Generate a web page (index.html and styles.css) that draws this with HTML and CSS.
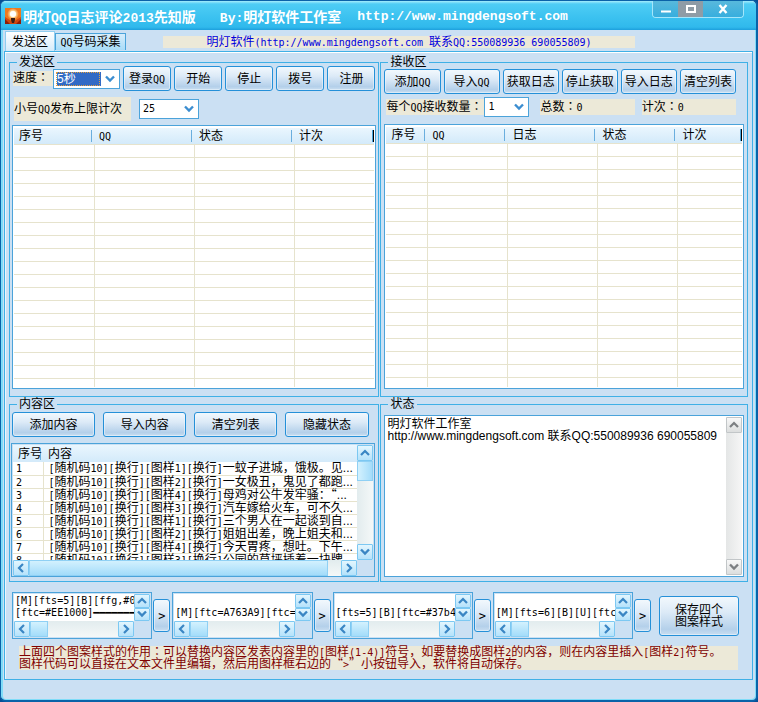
FILE: index.html
```html
<!DOCTYPE html>
<html lang="zh-CN">
<head>
<meta charset="utf-8">
<title>明灯QQ日志评论2013先知版</title>
<link rel="stylesheet" href="styles.css">
</head>
<body>
<svg class="defs" aria-hidden="true">
  <symbol id="down" viewBox="0 0 10 8"><path d="M1 1.500L5 5.500L9 1.500" fill="none" stroke="currentColor" stroke-width="2.400"/></symbol>
  <symbol id="up" viewBox="0 0 10 8"><path d="M1 6L5 2L9 6" fill="none" stroke="currentColor" stroke-width="2.200"/></symbol>
  <symbol id="left" viewBox="0 0 8 10"><path d="M6 1L2 5L6 9" fill="none" stroke="currentColor" stroke-width="2.200"/></symbol>
  <symbol id="right" viewBox="0 0 8 10"><path d="M2 1L6 5L2 9" fill="none" stroke="currentColor" stroke-width="2.200"/></symbol>
</svg>
<div class="window">
  <header class="titlebar">
    <svg class="logo" viewBox="0 0 16 16" aria-hidden="true">
      <defs><radialGradient id="glow"><stop offset="0" stop-color="#fff"/><stop offset=".45" stop-color="#ffe9a8"/><stop offset="1" stop-color="#f07018"/></radialGradient></defs>
      <rect width="16" height="16" fill="#cf4712"/>
      <path d="M0 0h16v9L8 14L0 9z" fill="#ef7a1c"/>
      <circle cx="8" cy="6" r="6" fill="url(#glow)"/>
      <circle cx="8" cy="6" r="3" fill="#fff"/>
      <path d="M6 10h4v2l-1 3H7l-1-3z" fill="#3c2018"/>
      <path d="M0 11l5 5H0zM16 11l-5 5h5z" fill="#8e1c08"/>
    </svg>
    <h1 class="title">
      <span>明灯<span class="en">QQ</span>日志评论<span class="en">2013</span>先知版</span>
      <span><span class="en">By:</span>明灯软件工作室</span>
      <span class="en">http://www.mingdengsoft.com</span>
    </h1>
    <div class="controls">
      <button class="ctl" aria-label="最小化"><svg width="12" height="10"><path d="M1 7.500H11" stroke="#fff" stroke-width="2"/></svg></button>
      <button class="ctl ctl-max" aria-label="最大化"><svg width="12" height="10"><rect x="2" y="2" width="8" height="6" fill="none" stroke="#fff" stroke-width="2"/></svg></button>
      <button class="ctl ctl-close" aria-label="关闭"><svg width="12" height="10"><path d="M2.500 1L9.500 9M9.500 1L2.500 9" stroke="#fff" stroke-width="2.400"/></svg></button>
    </div>
  </header>

  <div class="tabrow">
    <button class="tab tab-on">发送区</button>
    <button class="tab"><span class="l">QQ</span>号码采集</button>
    <p class="notice">明灯软件<span class="l">(http://www.mingdengsoft.com </span>联系<span class="l">QQ:550089936 690055809)</span></p>
  </div>

  <main class="page">
    <div class="groups">
      <fieldset class="group">
        <legend>发送区</legend>
        <div class="row send-row">
          <label class="tag tag-speed" for="speed">速度<span class="mid" lang="zh-TW">：</span></label>
          <span class="combo combo-speed"><select id="speed"><option>5秒</option></select><svg><use href="#down"/></svg></span>
          <button class="btn">登录<span class="l">QQ</span></button>
          <button class="btn">开始</button>
          <button class="btn">停止</button>
          <button class="btn">拨号</button>
          <button class="btn">注册</button>
        </div>
        <div class="row limit-row">
          <label class="tag tag-limit" for="limit">小号<span class="l">QQ</span>发布上限计次</label>
          <span class="combo combo-limit"><select id="limit" class="l"><option>25</option></select><svg><use href="#down"/></svg></span>
        </div>
        <div class="sheet">
          <table class="grid grid-send">
            <colgroup><col class="c80"><col class="c100"><col class="c100"><col></colgroup>
            <thead><tr><th>序号</th><th><span class="l">QQ</span></th><th>状态</th><th>计次</th></tr></thead>
            <tbody><tr><td></td><td></td><td></td><td></td></tr></tbody>
          </table>
        </div>
      </fieldset>

      <fieldset class="group">
        <legend>接收区</legend>
        <div class="row recv-row">
          <button class="btn">添加<span class="l">QQ</span></button>
          <button class="btn">导入<span class="l">QQ</span></button>
          <button class="btn">获取日志</button>
          <button class="btn">停止获取</button>
          <button class="btn">导入日志</button>
          <button class="btn">清空列表</button>
        </div>
        <div class="row count-row">
          <label class="tag tag-count" for="count">每个<span class="l">QQ</span>接收数量<span class="mid" lang="zh-TW">：</span></label>
          <span class="combo combo-count"><select id="count" class="l"><option>1</option></select><svg><use href="#down"/></svg></span>
          <span class="tag tag-total">总数<span class="mid" lang="zh-TW">：</span><span class="l">0</span></span>
          <span class="tag tag-times">计次<span class="mid" lang="zh-TW">：</span><span class="l">0</span></span>
        </div>
        <div class="sheet">
          <table class="grid grid-recv">
            <colgroup><col class="c40"><col class="c80"><col class="c90"><col class="c80"><col></colgroup>
            <thead><tr><th>序号</th><th><span class="l">QQ</span></th><th>日志</th><th>状态</th><th>计次</th></tr></thead>
            <tbody><tr><td></td><td></td><td></td><td></td><td></td></tr></tbody>
          </table>
        </div>
      </fieldset>

      <fieldset class="group">
        <legend>内容区</legend>
        <div class="row content-row">
          <button class="btn">添加内容</button>
          <button class="btn">导入内容</button>
          <button class="btn">清空列表</button>
          <button class="btn">隐藏状态</button>
        </div>
        <div class="scroller list">
          <div class="view">
            <table class="items">
              <colgroup><col class="c30"><col></colgroup>
              <thead><tr><th>序号</th><th>内容</th></tr></thead>
              <tbody>
                <tr><td><span class="l">1</span></td><td><span class="l">[</span>随机码<span class="l">10][</span>换行<span class="l">][</span>图样<span class="l">1][</span>换行<span class="l">]</span>一蚊子进城，饿极。见...</td></tr>
                <tr><td><span class="l">2</span></td><td><span class="l">[</span>随机码<span class="l">10][</span>换行<span class="l">][</span>图样<span class="l">2][</span>换行<span class="l">]</span>一女极丑，鬼见了都跑...</td></tr>
                <tr><td><span class="l">3</span></td><td><span class="l">[</span>随机码<span class="l">10][</span>换行<span class="l">][</span>图样<span class="l">4][</span>换行<span class="l">]</span>母鸡对公牛发牢骚：<span class="wide">“</span>...</td></tr>
                <tr><td><span class="l">4</span></td><td><span class="l">[</span>随机码<span class="l">10][</span>换行<span class="l">][</span>图样<span class="l">3][</span>换行<span class="l">]</span>汽车嫁给火车，可不久...</td></tr>
                <tr><td><span class="l">5</span></td><td><span class="l">[</span>随机码<span class="l">10][</span>换行<span class="l">][</span>图样<span class="l">1][</span>换行<span class="l">]</span>三个男人在一起谈到自...</td></tr>
                <tr><td><span class="l">6</span></td><td><span class="l">[</span>随机码<span class="l">10][</span>换行<span class="l">][</span>图样<span class="l">2][</span>换行<span class="l">]</span>姐姐出差，晚上姐夫和...</td></tr>
                <tr><td><span class="l">7</span></td><td><span class="l">[</span>随机码<span class="l">10][</span>换行<span class="l">][</span>图样<span class="l">4][</span>换行<span class="l">]</span>今天胃疼，想吐。下午...</td></tr>
                <tr><td><span class="l">8</span></td><td><span class="l">[</span>随机码<span class="l">10][</span>换行<span class="l">][</span>图样<span class="l">3][</span>换行<span class="l">]</span>公园的草坪插着一块牌</td></tr>
              </tbody>
            </table>
          </div>
          <div class="vbar"><button class="arrow" aria-label="向上"><svg><use href="#up"/></svg></button><i class="thumb"></i><button class="arrow" aria-label="向下"><svg><use href="#down"/></svg></button></div>
          <div class="hbar"><button class="arrow" aria-label="向左"><svg><use href="#left"/></svg></button><i class="thumb"></i><button class="arrow" aria-label="向右"><svg><use href="#right"/></svg></button></div>
        </div>
      </fieldset>

      <fieldset class="group">
        <legend>状态</legend>
        <div class="scroller log">
          <textarea class="view" aria-label="状态" spellcheck="false">明灯软件工作室
http://www.mingdengsoft.com 联系QQ:550089936 690055809</textarea>
          <div class="vbar"><button class="arrow" aria-label="向上"><svg><use href="#up"/></svg></button><button class="arrow" aria-label="向下"><svg><use href="#down"/></svg></button></div>
        </div>
      </fieldset>
    </div>

    <div class="patterns">
      <div class="scroller code">
        <textarea class="view" aria-label="图样1" wrap="off" spellcheck="false">[M][fts=5][B][ffg,#0
[ftc=#EE1000]━━━━━━━</textarea>
        <div class="vbar"><button class="arrow" aria-label="向上"><svg><use href="#up"/></svg></button><button class="arrow" aria-label="向下"><svg><use href="#down"/></svg></button></div>
        <div class="hbar"><button class="arrow" aria-label="向左"><svg><use href="#left"/></svg></button><i class="thumb"></i><button class="arrow" aria-label="向右"><svg><use href="#right"/></svg></button></div>
      </div>
      <button class="btn go">&gt;</button>
      <div class="scroller code">
        <textarea class="view" aria-label="图样2" wrap="off" spellcheck="false">

[M][ftc=A763A9][ftc=</textarea>
        <div class="vbar"><button class="arrow" aria-label="向上"><svg><use href="#up"/></svg></button><button class="arrow" aria-label="向下"><svg><use href="#down"/></svg></button></div>
        <div class="hbar"><button class="arrow" aria-label="向左"><svg><use href="#left"/></svg></button><i class="thumb"></i><button class="arrow" aria-label="向右"><svg><use href="#right"/></svg></button></div>
      </div>
      <button class="btn go">&gt;</button>
      <div class="scroller code">
        <textarea class="view" aria-label="图样3" wrap="off" spellcheck="false">

[fts=5][B][ftc=#37b4</textarea>
        <div class="vbar"><button class="arrow" aria-label="向上"><svg><use href="#up"/></svg></button><button class="arrow" aria-label="向下"><svg><use href="#down"/></svg></button></div>
        <div class="hbar"><button class="arrow" aria-label="向左"><svg><use href="#left"/></svg></button><i class="thumb"></i><button class="arrow" aria-label="向右"><svg><use href="#right"/></svg></button></div>
      </div>
      <button class="btn go">&gt;</button>
      <div class="scroller code">
        <textarea class="view" aria-label="图样4" wrap="off" spellcheck="false">

[M][fts=6][B][U][ftc</textarea>
        <div class="vbar"><button class="arrow" aria-label="向上"><svg><use href="#up"/></svg></button><button class="arrow" aria-label="向下"><svg><use href="#down"/></svg></button></div>
        <div class="hbar"><button class="arrow" aria-label="向左"><svg><use href="#left"/></svg></button><i class="thumb"></i><button class="arrow" aria-label="向右"><svg><use href="#right"/></svg></button></div>
      </div>
      <button class="btn go">&gt;</button>
      <button class="btn save">保存四个<br>图案样式</button>
    </div>

    <p class="hint">上面四个图案样式的作用<span class="mid" lang="zh-TW">：</span>可以替换内容区发表内容里的<span class="l">[</span>图样<span class="l">(1-4)]</span>符号，如要替换成图样<span class="l">2</span>的内容，则在内容里插入<span class="l">[</span>图样<span class="l">2]</span>符号。<br>图样代码可以直接在文本文件里编辑，然后用图样框右边的<span class="wide">“</span><span class="l">&gt;</span><span class="wide">”</span>小按钮导入，软件将自动保存。</p>
  </main>
</div>
</body>
</html>
```
FILE: styles.css
```css
* { box-sizing: border-box; }

:root {
  --face: #cbe0f3;
  --line: #3fb0e6;
  --frame: #4ba3da;
  --tan: #ece9d8;
}

body {
  margin: 0;
  background: #064f96;
  color: #000;
  font: 12px/12px "Liberation Sans", "Noto Sans CJK SC", sans-serif;
}

button, select, textarea { font: inherit; color: inherit; margin: 0; }
button { padding: 0; white-space: nowrap; }
h1, p { margin: 0; }
.defs { position: absolute; width: 0; height: 0; }

/* Latin runs take half the width of a Chinese character */
.l { font-family: "DejaVu Sans Mono", monospace; font-size: 10px; white-space: pre; }
span.l, .mid, .wide, .en { line-height: 0; }
/* colon centred in its cell, and full-width quotes */
.mid { font-family: "Noto Sans CJK TC", sans-serif; }
.wide { font-family: "Noto Sans CJK SC", sans-serif; }

.window {
  display: flex;
  flex-direction: column;
  min-height: 100vh;
  border: 2px solid #0a62a8;
  border-width: 1px 2px 2px 1px;
  border-radius: 6px;
  background: var(--face);
  box-shadow: inset 2px 0 #7fdcf8, inset -1px -1px #7fdcf8;
  padding-bottom: 20px;
}

/* title bar */
.titlebar {
  display: flex;
  height: 29px;
  padding: 0 12px 0 4px;
  border-radius: 5px 5px 0 0;
  background: linear-gradient(#a4ecfc, #4ecdf5 3px, #3cc2f0 55%, #30b9ec 90%, #1d9fdd);
}
.logo { width: 16px; height: 16px; margin-top: 7px; }
.title {
  flex: 1;
  display: flex;
  margin: 8px 0 0 2px;
  color: #fff;
  font-size: 14px;
  line-height: 16px;
  white-space: nowrap;
}
.title > span { margin-right: 16px; line-height: 16px; }
.title > span:first-child { margin-right: 24px; }
.title .en { font-family: "Liberation Mono", monospace; font-size: 13px; }
.controls {
  display: flex;
  height: 17px;
  border: 1px solid #a5e6fa;
  border-top: 0;
  border-radius: 0 0 4px 4px;
  overflow: hidden;
}
.ctl {
  display: flex;
  align-items: center;
  justify-content: center;
  width: 25px;
  border: 0;
  background: linear-gradient(#58b9dc, #37aede);
}
.ctl-max { background: #8f9ca6; }
.ctl-close { width: 40px; }

/* tabs */
.tabrow {
  display: flex;
  align-items: flex-end;
  height: 21px;
  padding-left: 4px;
  margin-right: 2px;
}
.tab {
  width: 71px;
  height: 17px;
  margin-bottom: 1px;
  border: 1px solid var(--frame);
  border-bottom: 0;
  background: linear-gradient(#d7edfb, #a9dcf8);
}
.tab-on {
  width: 50px;
  height: 20px;
  margin-bottom: 0;
  border-color: #8fcdf0;
  background: linear-gradient(#fff, #d5ebfa);
}
.notice {
  flex: 1;
  max-width: 472px;
  margin: 0 0 3px 37px;
  background: var(--tan);
  color: #0000e0;
  text-align: center;
  white-space: nowrap;
}

.page {
  flex: 1;
  display: flex;
  flex-direction: column;
  margin: 0 3px;
  padding: 3px 4px 9px 4px;
  border: 1px solid var(--line);
  box-shadow: inset 0 1px #fff, inset 1px 0 #eaf5fd;
}
.groups {
  flex: 1;
  display: grid;
  grid-template-columns: 371fr 368fr;
  grid-template-rows: 342fr 185fr;
  gap: 0 1px;
}
.group {
  display: flex;
  flex-direction: column;
  min-width: 0;
  min-height: 0;
  margin: 0;
  padding: 0 2px 7px;
  border: 1px solid var(--line);
}
legend { height: 14px; margin-left: 5px; padding: 0 2px; line-height: 14px; }

/* toolbars */
.row { display: flex; align-items: center; }
.btn {
  height: 25px;
  border: 1px solid #2590d8;
  border-radius: 3px;
  background: linear-gradient(#f2f8fd, #dceaf7 40%, #b4d0ea 85%, #c9def1);
  box-shadow: inset 0 0 0 1px #f0f8fe88;
}
.row .btn { flex: 1; min-width: 0; }
.send-row { gap: 3px; margin-top: -3px; padding: 0 1px; }
.limit-row { gap: 8px; margin-top: 6px; padding-left: 2px; }
.recv-row { gap: 3px; padding: 0 9px 0 1px; }
.count-row { margin: 3px 9px 0 3px; }
.content-row { gap: 8px; margin-top: 1px; padding-right: 8px; }

.tag { background: var(--tan); white-space: nowrap; }
.tag-speed { width: 40px; height: 15px; margin-right: -3px; line-height: 15px; }
.tag-limit { width: 117px; height: 24px; line-height: 24px; }
.tag-count { width: 98px; height: 16px; line-height: 16px; }
.tag-total, .tag-times { flex: 1; height: 16px; line-height: 16px; }
.tag-total { margin: 0 7px 0 11px; }

.combo { display: grid; height: 20px; }
.combo > * { grid-area: 1 / 1; }
.combo select {
  width: 100%;
  appearance: none;
  border: 1px solid var(--frame);
  border-radius: 0;
  background: #fff;
  padding: 2px 18px 2px 3px;
  outline: 0;
}
.combo svg { width: 10px; height: 8px; margin: 6px 5px 0 0; justify-self: end; color: #3b8dd0; pointer-events: none; }
.combo-speed { width: 67px; position: relative; }
.combo-speed select { background: linear-gradient(#316ac5, #316ac5) content-box, #fff; color: #fff; }
.combo-speed::after {
  content: "";
  position: absolute;
  inset: 3px 20px 3px 3px;
  border: 1px dotted #e0a040;
}
.combo-limit { width: 60px; }
.combo-count { width: 45px; }

/* empty record sheets */
.sheet {
  flex: 1;
  display: flex;
  min-height: 0;
  margin-top: 4px;
  padding: 2px 1px 1px;
  border: 1px solid var(--frame);
  background: #fff;
}
.count-row + .sheet { margin: 7px 1px 0; }
.grid, .items { width: 100%; border-collapse: collapse; table-layout: fixed; }
.grid th, .items th {
  height: 16px;
  padding: 0 0 0 5px;
  background: linear-gradient(90deg, #6aaede, #6aaede) right 2px center / 1px 12px no-repeat, linear-gradient(#eaf6fe, #d3eafa);
  font-weight: normal;
  text-align: left;
  white-space: nowrap;
}
.grid th:last-child { background: linear-gradient(90deg, #4ba3da 1px, #000 1px) right / 2px 12px no-repeat, linear-gradient(#eaf6fe, #d3eafa); }
.grid td {
  border-right: 1px solid #e6e3cd;
  background: repeating-linear-gradient(#e6e3cd 0 1px, #fff 1px 13px);
}
.grid td:last-child { border-right: 0; }
.grid thead { height: 16px; }
.c30 { width: 30px; }
.c40 { width: 41px; }
.c80 { width: 80px; }
.c90 { width: 90px; }
.c100 { width: 100px; }

/* framed views with their own scroll bars */
.scroller {
  display: grid;
  grid-template-columns: 1fr 16px;
  grid-template-rows: 1fr 16px;
  min-height: 0;
  padding: 1px;
  border: 1px solid var(--frame);
  background: linear-gradient(#fff, #fff) padding-box;
}
.view { min-width: 0; min-height: 0; overflow: hidden; background: #fff; }
textarea.view { width: 100%; height: 100%; resize: none; border: 0; border-radius: 0; padding: 1px; outline: 0; }
.vbar, .hbar { display: flex; min-width: 0; min-height: 0; background: #eaf2f2; }
.vbar { flex-direction: column; background: linear-gradient(90deg, #e2ecee, #f4f8f8); }
.hbar { background: linear-gradient(#e2ecee, #f4f8f8); }
.vbar .arrow:last-child { margin-top: auto; }
.hbar .arrow:last-child { margin-left: auto; }
.arrow {
  flex: 0 1 16px;
  display: flex;
  align-items: center;
  justify-content: center;
  min-width: 0;
  min-height: 0;
  border: 1px solid #7cc8f2;
  border-radius: 1px;
  background: linear-gradient(#e3f6fe, #b5e2fb);
  color: #3a86c4;
}
.vbar .arrow { width: 16px; }
.arrow svg { width: 10px; height: 8px; flex: none; }
.hbar .arrow svg { width: 8px; height: 10px; }
.thumb { border: 1px solid #8fd0f4; background: linear-gradient(#d3f1fe, #a3dcfa); }
.vbar .thumb { height: 20px; background: linear-gradient(90deg, #d3f1fe, #a3dcfa); }
.hbar .thumb { width: 18px; }

.list { flex: 1; margin: 6px 1px 0 -1px; padding: 1px 1px 0 1px; background: linear-gradient(var(--face), var(--face)); }
.list .view { contain: size; }
.group:has(.list), .group:has(.log) { padding-bottom: 4px; }
.list .hbar .thumb { width: auto; flex: 1; margin-right: 13px; }
.items tr > :first-child { width: 31px; }
.items th:last-child { background: linear-gradient(#eaf6fe, #d3eafa); }
.items th { height: 17px; overflow: hidden; }
.items td {
  height: 13px;
  padding: 0 0 0 5px;
  border-bottom: 1px solid #e6e3cd;
  border-right: 1px solid #e6e3cd;
  line-height: 12px;
  white-space: nowrap;
}
.items td:first-child { padding-left: 3px; }
.items td:last-child { border-right: 0; }

.log { flex: 1; grid-template-rows: 1fr; margin: 4px 1px 0; }
.log .vbar { background: linear-gradient(90deg, #e4e6e6, #f6f6f6); }
.log .arrow { border-color: #c2c6c8; background: linear-gradient(#f8f8f8, #dcdede); color: #7c7f82; }

/* pattern editors */
.patterns {
  display: flex;
  align-items: center;
  gap: 1px;
  margin: 10px 9px 0 3px;
}
.code {
  flex: 1;
  height: 47px;
  background: var(--face);
  font: 10px/12px "DejaVu Sans Mono", "Noto Sans CJK SC", monospace;
}
.go { width: 17px; height: 33px; margin-right: 1px; font-family: "DejaVu Sans Mono", monospace; }
.save { width: 80px; height: 40px; margin-left: 6px; }

.hint {
  margin: 7px 10px 0 10px;
  background: var(--tan);
  color: #800000;
}
```
